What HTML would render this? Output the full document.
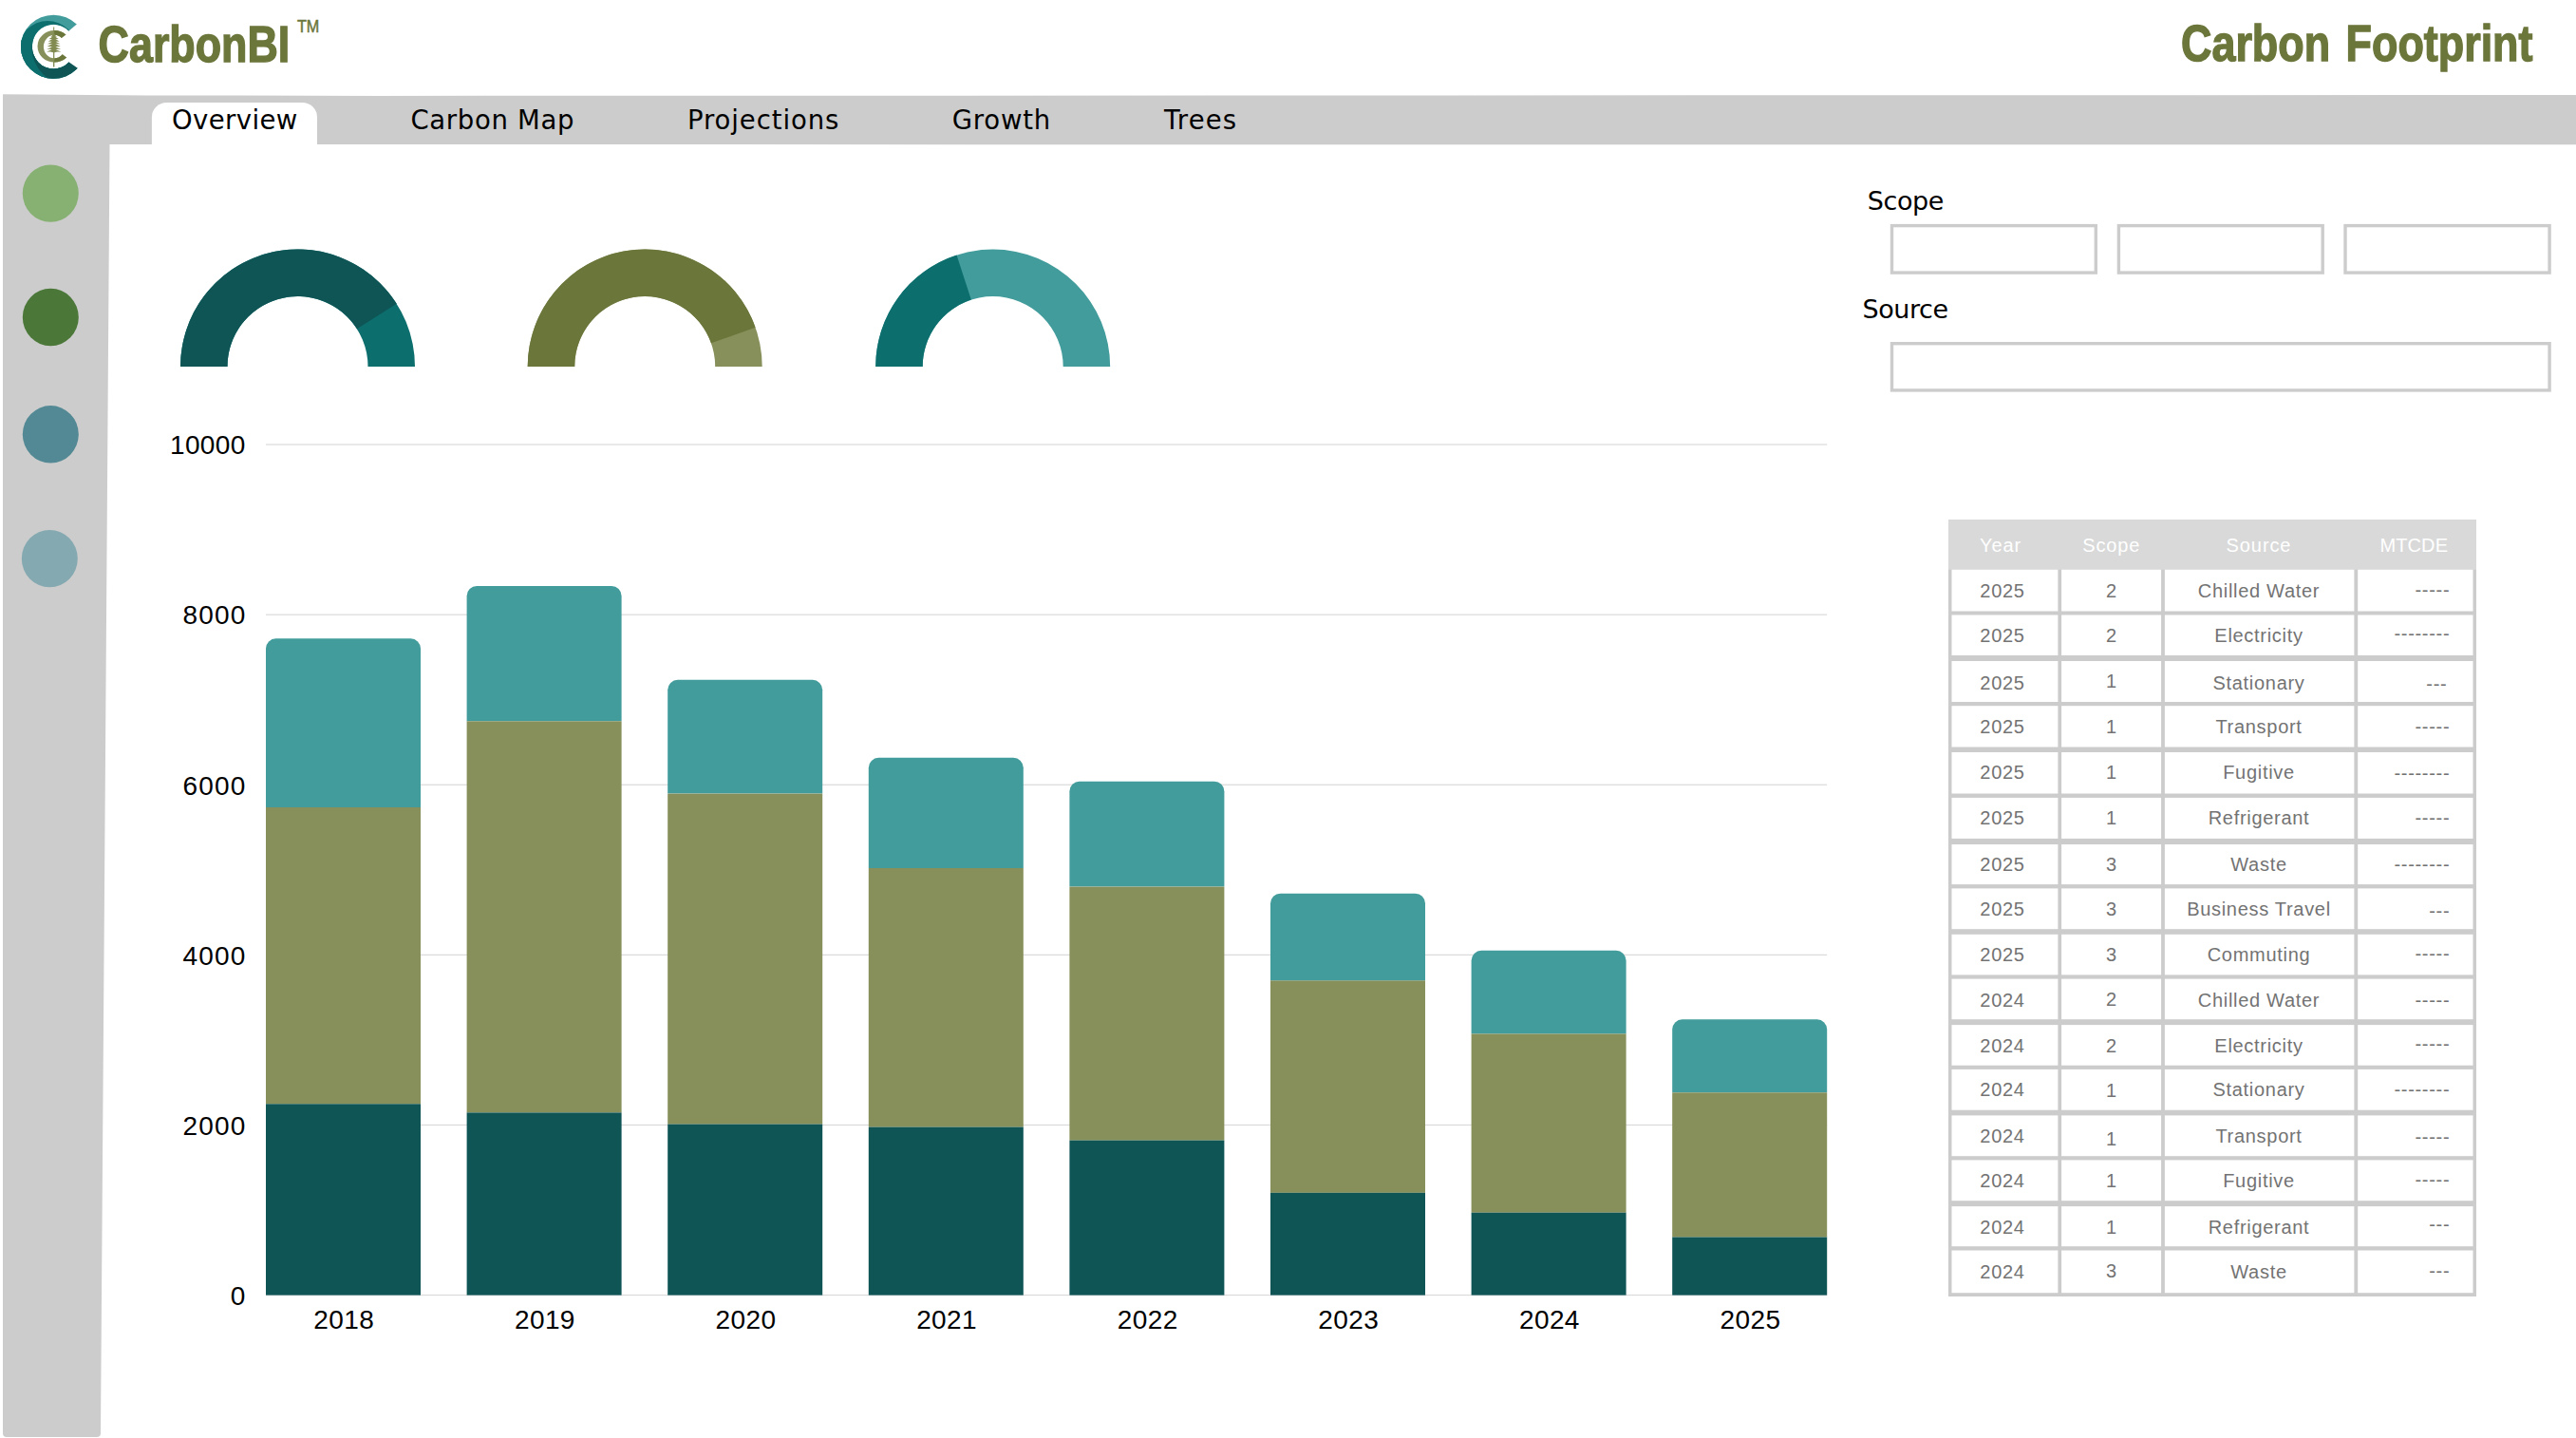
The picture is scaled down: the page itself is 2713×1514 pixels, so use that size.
<!DOCTYPE html>
<html lang="en"><head><meta charset="utf-8"><title>CarbonBI - Carbon Footprint</title>
<style>
html,body{margin:0;padding:0;background:#fff;}
body{width:2713px;height:1514px;overflow:hidden;position:relative;}
svg{position:absolute;left:0;top:0;display:block;}
text{font-family:"Liberation Sans",sans-serif;}
.dj{font-family:"DejaVu Sans","Liberation Sans",sans-serif;}
.tab{font-family:"DejaVu Sans","Liberation Sans",sans-serif;font-size:27.5px;fill:#000;letter-spacing:0.5px;}
.lbl{font-family:"DejaVu Sans","Liberation Sans",sans-serif;font-size:27px;fill:#000;letter-spacing:-0.4px;}
.ax{font-size:28px;fill:#000;letter-spacing:0.4px;}
.brand{font-weight:bold;fill:#6b763b;stroke:#6b763b;stroke-width:1.4px;stroke-linejoin:miter;}
.th{font-size:20px;fill:#fff;letter-spacing:0.7px;text-anchor:middle;}
.td{font-size:20px;fill:#737373;letter-spacing:0.7px;text-anchor:middle;}
.tdr{font-size:20px;fill:#737373;letter-spacing:0.7px;text-anchor:end;}
</style></head><body>
<svg width="2713" height="1514" viewBox="0 0 2713 1514">
<path d="M3 99.3 L155 100.4 L400 100.9 L1300 100.5 L2713 100 V152.3 L1300 152.3 L115.5 151.9 L106 1509 Q106 1513 102 1513 H7 Q3 1513 3 1509 Z" fill="#cccccc"/>
<path d="M159.9 153 V123.5 A15.5 15.5 0 0 1 175.4 108 H318.5 A15.5 15.5 0 0 1 334 123.5 V153 Z" fill="#fff"/>
<text class="tab" x="181.0" y="135.6" style="letter-spacing:0.4px">Overview</text>
<text class="tab" x="432.4" y="135.6" style="letter-spacing:0.7px">Carbon Map</text>
<text class="tab" x="724" y="135.6" style="letter-spacing:0.9px">Projections</text>
<text class="tab" x="1002.7" y="135.6" style="letter-spacing:0.8px">Growth</text>
<text class="tab" x="1226" y="135.6" style="letter-spacing:1.1px">Trees</text>
<ellipse cx="53.3" cy="203.6" rx="29.5" ry="30.2" fill="#86b172"/>
<ellipse cx="53.3" cy="334.0" rx="29.5" ry="30.2" fill="#4b7838"/>
<ellipse cx="53.3" cy="457.3" rx="29.5" ry="30.2" fill="#528994"/>
<ellipse cx="52.3" cy="588.1" rx="29.5" ry="30.2" fill="#85a9b1"/>
<defs>
<clipPath id="cOuter"><path clip-rule="evenodd" d="M21.94 49.16 a34.43 33.52 0 1 0 68.86 0 a34.43 33.52 0 1 0 -68.86 0 Z M33.8 49.08 a22.53 23.44 0 1 0 45.06 0 a22.53 23.44 0 1 0 -45.06 0 Z"/></clipPath>
<clipPath id="cInner"><path clip-rule="evenodd" d="M39.5 48.8 a17.8 16.8 0 1 0 35.6 0 a17.8 16.8 0 1 0 -35.6 0 Z M45.9 49.12 a11.38 12.29 0 1 0 22.76 0 a11.38 12.29 0 1 0 -22.76 0 Z"/></clipPath>
<clipPath id="lowHalf"><rect x="15" y="47" width="75" height="45"/></clipPath>
</defs>
<g clip-path="url(#cOuter)">
<rect x="15" y="10" width="80" height="80" fill="#429c9c"/>
<circle cx="50.1" cy="52.3" r="30.4" fill="#0d6e6e"/>
<rect x="15" y="40" width="80" height="50" fill="#0d6e6e"/>
<g clip-path="url(#lowHalf)"><circle cx="72.6" cy="50.1" r="39.05" fill="#0f5556"/></g>
</g>
<path d="M59.75 43.15 L89.5 18.3 L96 18 L96 79 L90.7 77.9 L58.85 55.85 Z" fill="#fff"/>
<g clip-path="url(#cInner)">
<rect x="35" y="28" width="40" height="42" fill="#87905b"/>
<rect x="56.7" y="28" width="20" height="42" fill="#6b763b"/>
</g>
<path d="M61.6 42.4 L74.2 32.9 L77 33 L77 64 L74.5 63.8 L61.9 54.3 Z" fill="#fff"/>
<g fill="#828c52">
<path d="M56.2 28.4 L57.2 28.4 L57.4 70.6 L56.0 70.6 Z"/>
<path d="M56.7 35.2 L54.8 37.4 L53.5 38.7 L55.3 38.8 L56.7 39.7 L58.1 38.8 L59.9 38.7 L58.6 37.4 Z"/>
<path d="M56.7 37.6 L53.7 39.8 L51.7 41.1 L54.5 41.2 L56.7 42.1 L59.0 41.2 L61.7 41.1 L59.7 39.8 Z"/>
<path d="M56.7 40.1 L53.1 42.3 L50.7 43.6 L54.0 43.7 L56.7 44.6 L59.4 43.7 L62.7 43.6 L60.3 42.3 Z"/>
<path d="M56.7 42.7 L52.6 44.9 L49.9 46.2 L53.6 46.3 L56.7 47.2 L59.8 46.3 L63.5 46.2 L60.8 44.9 Z"/>
<path d="M56.7 45.4 L52.5 47.6 L49.7 48.9 L53.6 49.0 L56.7 49.9 L59.9 49.0 L63.7 48.9 L60.9 47.6 Z"/>
<path d="M56.7 48.2 L52.3 50.4 L49.3 51.7 L53.4 51.8 L56.7 52.7 L60.0 51.8 L64.1 51.7 L61.1 50.4 Z"/>
<path d="M56.7 51.0 L52.1 53.2 L49.1 54.5 L53.3 54.6 L56.7 55.5 L60.1 54.6 L64.3 54.5 L61.3 53.2 Z"/>
</g>
<text class="brand" transform="translate(103.6,64.8) scale(0.83,1)" x="0" y="0" font-size="54">CarbonBI</text>
<text class="brand" style="stroke-width:0.5px;font-weight:normal" transform="translate(312.9,33.9) scale(0.87,1)" x="0" y="0" font-size="18.6">TM</text>
<text class="brand" transform="translate(2297,64.2) scale(0.847,1)" x="0" y="0" font-size="53" style="word-spacing:4.7px">Carbon Footprint</text>
<path d="M190.00 386.00 A123.5 123.5 0 0 1 437.00 386.00 L387.50 386.00 A74 74 0 0 0 239.50 386.00 Z" fill="#0d6e6e"/>
<path d="M190.00 386.00 A123.5 123.5 0 0 1 417.77 319.83 L375.98 346.35 A74 74 0 0 0 239.50 386.00 Z" fill="#0f5556"/>
<path d="M555.70 386.00 A123.5 123.5 0 0 1 802.70 386.00 L753.20 386.00 A74 74 0 0 0 605.20 386.00 Z" fill="#87905b"/>
<path d="M555.70 386.00 A123.5 123.5 0 0 1 795.62 344.77 L748.96 361.30 A74 74 0 0 0 605.20 386.00 Z" fill="#6b763b"/>
<path d="M922.20 386.00 A123.5 123.5 0 0 1 1169.20 386.00 L1119.70 386.00 A74 74 0 0 0 971.70 386.00 Z" fill="#429c9c"/>
<path d="M922.20 386.00 A123.5 123.5 0 0 1 1007.54 268.54 L1022.83 315.62 A74 74 0 0 0 971.70 386.00 Z" fill="#0d6e6e"/>
<rect x="280" y="1362.95" width="1644.2" height="1.2" fill="#dadada"/>
<text class="ax" x="258.8" y="1373.8" text-anchor="end" style="letter-spacing:0.4px">0</text>
<rect x="280" y="1183.85" width="1644.2" height="1.2" fill="#dadada"/>
<text class="ax" x="259.6" y="1194.7" text-anchor="end" style="letter-spacing:1.2px">2000</text>
<rect x="280" y="1004.75" width="1644.2" height="1.2" fill="#dadada"/>
<text class="ax" x="259.6" y="1015.6" text-anchor="end" style="letter-spacing:1.2px">4000</text>
<rect x="280" y="825.65" width="1644.2" height="1.2" fill="#dadada"/>
<text class="ax" x="259.6" y="836.5" text-anchor="end" style="letter-spacing:1.2px">6000</text>
<rect x="280" y="646.55" width="1644.2" height="1.2" fill="#dadada"/>
<text class="ax" x="259.6" y="657.4" text-anchor="end" style="letter-spacing:1.2px">8000</text>
<rect x="280" y="467.45" width="1644.2" height="1.2" fill="#dadada"/>
<text class="ax" x="258.8" y="478.3" text-anchor="end" style="letter-spacing:0.4px">10000</text>
<path d="M280.0 850.0 V682.8 A10.5 10.5 0 0 1 290.5 672.3 H432.5 A10.5 10.5 0 0 1 443.0 682.8 V850.0 Z" fill="#429c9c"/>
<rect x="280.0" y="850.0" width="163" height="312.3" fill="#87905b"/>
<rect x="280.0" y="1162.3" width="163" height="201.3" fill="#0f5556"/>
<text class="ax" x="362.3" y="1399.4" text-anchor="middle">2018</text>
<path d="M491.6 759.3 V627.4 A10.5 10.5 0 0 1 502.1 616.9 H644.1 A10.5 10.5 0 0 1 654.6 627.4 V759.3 Z" fill="#429c9c"/>
<rect x="491.6" y="759.3" width="163" height="412.1" fill="#87905b"/>
<rect x="491.6" y="1171.4" width="163" height="192.2" fill="#0f5556"/>
<text class="ax" x="573.9" y="1399.4" text-anchor="middle">2019</text>
<path d="M703.2 835.6 V726.3 A10.5 10.5 0 0 1 713.7 715.8 H855.7 A10.5 10.5 0 0 1 866.2 726.3 V835.6 Z" fill="#429c9c"/>
<rect x="703.2" y="835.6" width="163" height="348.0" fill="#87905b"/>
<rect x="703.2" y="1183.6" width="163" height="180.0" fill="#0f5556"/>
<text class="ax" x="785.5" y="1399.4" text-anchor="middle">2020</text>
<path d="M914.8 914.0 V808.3 A10.5 10.5 0 0 1 925.3 797.8 H1067.3 A10.5 10.5 0 0 1 1077.8 808.3 V914.0 Z" fill="#429c9c"/>
<rect x="914.8" y="914.0" width="163" height="272.6" fill="#87905b"/>
<rect x="914.8" y="1186.6" width="163" height="177.0" fill="#0f5556"/>
<text class="ax" x="997.1" y="1399.4" text-anchor="middle">2021</text>
<path d="M1126.4 933.6 V833.2 A10.5 10.5 0 0 1 1136.9 822.7 H1278.9 A10.5 10.5 0 0 1 1289.4 833.2 V933.6 Z" fill="#429c9c"/>
<rect x="1126.4" y="933.6" width="163" height="267.0" fill="#87905b"/>
<rect x="1126.4" y="1200.6" width="163" height="163.0" fill="#0f5556"/>
<text class="ax" x="1208.7" y="1399.4" text-anchor="middle">2022</text>
<path d="M1338.0 1032.4 V951.2 A10.5 10.5 0 0 1 1348.5 940.7 H1490.5 A10.5 10.5 0 0 1 1501.0 951.2 V1032.4 Z" fill="#429c9c"/>
<rect x="1338.0" y="1032.4" width="163" height="223.4" fill="#87905b"/>
<rect x="1338.0" y="1255.8" width="163" height="107.8" fill="#0f5556"/>
<text class="ax" x="1420.3" y="1399.4" text-anchor="middle">2023</text>
<path d="M1549.6 1088.5 V1011.3 A10.5 10.5 0 0 1 1560.1 1000.8 H1702.1 A10.5 10.5 0 0 1 1712.6 1011.3 V1088.5 Z" fill="#429c9c"/>
<rect x="1549.6" y="1088.5" width="163" height="188.2" fill="#87905b"/>
<rect x="1549.6" y="1276.7" width="163" height="86.9" fill="#0f5556"/>
<text class="ax" x="1631.9" y="1399.4" text-anchor="middle">2024</text>
<path d="M1761.2 1150.3 V1083.8 A10.5 10.5 0 0 1 1771.7 1073.3 H1913.7 A10.5 10.5 0 0 1 1924.2 1083.8 V1150.3 Z" fill="#429c9c"/>
<rect x="1761.2" y="1150.3" width="163" height="152.2" fill="#87905b"/>
<rect x="1761.2" y="1302.5" width="163" height="61.1" fill="#0f5556"/>
<text class="ax" x="1843.5" y="1399.4" text-anchor="middle">2025</text>
<text class="lbl" x="1966.8" y="220.8">Scope</text>
<text class="lbl" x="1961.4" y="334.9">Source</text>
<rect x="1992.5" y="237.6" width="214.8" height="49.5" fill="#fff" stroke="#cccccc" stroke-width="3.4"/>
<rect x="2231.4" y="237.6" width="214.8" height="49.5" fill="#fff" stroke="#cccccc" stroke-width="3.4"/>
<rect x="2470.0" y="237.6" width="215.1" height="49.5" fill="#fff" stroke="#cccccc" stroke-width="3.4"/>
<rect x="1992.5" y="361.7" width="692.6" height="49.2" fill="#fff" stroke="#cccccc" stroke-width="3.4"/>
<rect x="2052" y="547" width="556" height="818" fill="#cccccc"/>
<rect x="2052" y="547" width="556" height="52.7" fill="#d9d9d9"/>
<rect x="2055.5" y="599.7" width="111.9" height="43.8" fill="#fff"/>
<rect x="2171.1" y="599.7" width="105.0" height="43.8" fill="#fff"/>
<rect x="2279.9" y="599.7" width="199.5" height="43.8" fill="#fff"/>
<rect x="2483.2" y="599.7" width="121.3" height="43.8" fill="#fff"/>
<rect x="2055.5" y="647.5" width="111.9" height="42.5" fill="#fff"/>
<rect x="2171.1" y="647.5" width="105.0" height="42.5" fill="#fff"/>
<rect x="2279.9" y="647.5" width="199.5" height="42.5" fill="#fff"/>
<rect x="2483.2" y="647.5" width="121.3" height="42.5" fill="#fff"/>
<rect x="2055.5" y="696" width="111.9" height="43.0" fill="#fff"/>
<rect x="2171.1" y="696" width="105.0" height="43.0" fill="#fff"/>
<rect x="2279.9" y="696" width="199.5" height="43.0" fill="#fff"/>
<rect x="2483.2" y="696" width="121.3" height="43.0" fill="#fff"/>
<rect x="2055.5" y="743.2" width="111.9" height="43.3" fill="#fff"/>
<rect x="2171.1" y="743.2" width="105.0" height="43.3" fill="#fff"/>
<rect x="2279.9" y="743.2" width="199.5" height="43.3" fill="#fff"/>
<rect x="2483.2" y="743.2" width="121.3" height="43.3" fill="#fff"/>
<rect x="2055.5" y="792" width="111.9" height="43.5" fill="#fff"/>
<rect x="2171.1" y="792" width="105.0" height="43.5" fill="#fff"/>
<rect x="2279.9" y="792" width="199.5" height="43.5" fill="#fff"/>
<rect x="2483.2" y="792" width="121.3" height="43.5" fill="#fff"/>
<rect x="2055.5" y="839.9" width="111.9" height="43.0" fill="#fff"/>
<rect x="2171.1" y="839.9" width="105.0" height="43.0" fill="#fff"/>
<rect x="2279.9" y="839.9" width="199.5" height="43.0" fill="#fff"/>
<rect x="2483.2" y="839.9" width="121.3" height="43.0" fill="#fff"/>
<rect x="2055.5" y="889" width="111.9" height="42.1" fill="#fff"/>
<rect x="2171.1" y="889" width="105.0" height="42.1" fill="#fff"/>
<rect x="2279.9" y="889" width="199.5" height="42.1" fill="#fff"/>
<rect x="2483.2" y="889" width="121.3" height="42.1" fill="#fff"/>
<rect x="2055.5" y="935.4" width="111.9" height="42.8" fill="#fff"/>
<rect x="2171.1" y="935.4" width="105.0" height="42.8" fill="#fff"/>
<rect x="2279.9" y="935.4" width="199.5" height="42.8" fill="#fff"/>
<rect x="2483.2" y="935.4" width="121.3" height="42.8" fill="#fff"/>
<rect x="2055.5" y="983.8" width="111.9" height="42.6" fill="#fff"/>
<rect x="2171.1" y="983.8" width="105.0" height="42.6" fill="#fff"/>
<rect x="2279.9" y="983.8" width="199.5" height="42.6" fill="#fff"/>
<rect x="2483.2" y="983.8" width="121.3" height="42.6" fill="#fff"/>
<rect x="2055.5" y="1030.6" width="111.9" height="42.6" fill="#fff"/>
<rect x="2171.1" y="1030.6" width="105.0" height="42.6" fill="#fff"/>
<rect x="2279.9" y="1030.6" width="199.5" height="42.6" fill="#fff"/>
<rect x="2483.2" y="1030.6" width="121.3" height="42.6" fill="#fff"/>
<rect x="2055.5" y="1079.1" width="111.9" height="42.6" fill="#fff"/>
<rect x="2171.1" y="1079.1" width="105.0" height="42.6" fill="#fff"/>
<rect x="2279.9" y="1079.1" width="199.5" height="42.6" fill="#fff"/>
<rect x="2483.2" y="1079.1" width="121.3" height="42.6" fill="#fff"/>
<rect x="2055.5" y="1125.9" width="111.9" height="42.8" fill="#fff"/>
<rect x="2171.1" y="1125.9" width="105.0" height="42.8" fill="#fff"/>
<rect x="2279.9" y="1125.9" width="199.5" height="42.8" fill="#fff"/>
<rect x="2483.2" y="1125.9" width="121.3" height="42.8" fill="#fff"/>
<rect x="2055.5" y="1174.4" width="111.9" height="42.8" fill="#fff"/>
<rect x="2171.1" y="1174.4" width="105.0" height="42.8" fill="#fff"/>
<rect x="2279.9" y="1174.4" width="199.5" height="42.8" fill="#fff"/>
<rect x="2483.2" y="1174.4" width="121.3" height="42.8" fill="#fff"/>
<rect x="2055.5" y="1221.4" width="111.9" height="42.8" fill="#fff"/>
<rect x="2171.1" y="1221.4" width="105.0" height="42.8" fill="#fff"/>
<rect x="2279.9" y="1221.4" width="199.5" height="42.8" fill="#fff"/>
<rect x="2483.2" y="1221.4" width="121.3" height="42.8" fill="#fff"/>
<rect x="2055.5" y="1270.1" width="111.9" height="42.1" fill="#fff"/>
<rect x="2171.1" y="1270.1" width="105.0" height="42.1" fill="#fff"/>
<rect x="2279.9" y="1270.1" width="199.5" height="42.1" fill="#fff"/>
<rect x="2483.2" y="1270.1" width="121.3" height="42.1" fill="#fff"/>
<rect x="2055.5" y="1316.5" width="111.9" height="44.7" fill="#fff"/>
<rect x="2171.1" y="1316.5" width="105.0" height="44.7" fill="#fff"/>
<rect x="2279.9" y="1316.5" width="199.5" height="44.7" fill="#fff"/>
<rect x="2483.2" y="1316.5" width="121.3" height="44.7" fill="#fff"/>
<text class="th" x="2107.0" y="581" style="letter-spacing:0.9px">Year</text>
<text class="th" x="2223.8" y="581" style="letter-spacing:0.9px">Scope</text>
<text class="th" x="2379.0" y="581" style="letter-spacing:0.9px">Source</text>
<text class="th" x="2542.3" y="581" style="letter-spacing:0.1px">MTCDE</text>
<text class="td" x="2109" y="628.9">2025</text>
<text class="td" x="2224" y="628.9">2</text>
<text class="td" x="2379" y="628.9">Chilled Water</text>
<text class="tdr" x="2580.3" y="627.8">-----</text>
<text class="td" x="2109" y="676.0">2025</text>
<text class="td" x="2224" y="676.0">2</text>
<text class="td" x="2379" y="676.0">Electricity</text>
<text class="tdr" x="2580.3" y="674.4">--------</text>
<text class="td" x="2109" y="726.2">2025</text>
<text class="td" x="2224" y="724.3">1</text>
<text class="td" x="2379" y="726.2">Stationary</text>
<text class="tdr" x="2577.4" y="726.5">---</text>
<text class="td" x="2109" y="771.9">2025</text>
<text class="td" x="2224" y="771.9">1</text>
<text class="td" x="2379" y="771.9">Transport</text>
<text class="tdr" x="2580.3" y="771.6">-----</text>
<text class="td" x="2109" y="820.0">2025</text>
<text class="td" x="2224" y="820.0">1</text>
<text class="td" x="2379" y="820.0">Fugitive</text>
<text class="tdr" x="2580.3" y="821.0">--------</text>
<text class="td" x="2109" y="868.1">2025</text>
<text class="td" x="2224" y="868.1">1</text>
<text class="td" x="2379" y="868.1">Refrigerant</text>
<text class="tdr" x="2580.3" y="867.5">-----</text>
<text class="td" x="2109" y="916.9">2025</text>
<text class="td" x="2224" y="916.9">3</text>
<text class="td" x="2379" y="916.9">Waste</text>
<text class="tdr" x="2580.3" y="917.2">--------</text>
<text class="td" x="2109" y="963.7">2025</text>
<text class="td" x="2224" y="963.7">3</text>
<text class="td" x="2379" y="963.7">Business Travel</text>
<text class="tdr" x="2580.3" y="965.7">---</text>
<text class="td" x="2109" y="1012.0">2025</text>
<text class="td" x="2224" y="1012.0">3</text>
<text class="td" x="2379" y="1012.0">Commuting</text>
<text class="tdr" x="2580.3" y="1010.6">-----</text>
<text class="td" x="2109" y="1060.0">2024</text>
<text class="td" x="2224" y="1058.8">2</text>
<text class="td" x="2379" y="1060.0">Chilled Water</text>
<text class="tdr" x="2580.3" y="1059.6">-----</text>
<text class="td" x="2109" y="1107.7">2024</text>
<text class="td" x="2224" y="1107.7">2</text>
<text class="td" x="2379" y="1107.7">Electricity</text>
<text class="tdr" x="2580.3" y="1106.4">-----</text>
<text class="td" x="2109" y="1153.8">2024</text>
<text class="td" x="2224" y="1155.0">1</text>
<text class="td" x="2379" y="1153.8">Stationary</text>
<text class="tdr" x="2580.3" y="1154.1">--------</text>
<text class="td" x="2109" y="1203.1">2024</text>
<text class="td" x="2224" y="1205.5">1</text>
<text class="td" x="2379" y="1203.1">Transport</text>
<text class="tdr" x="2580.3" y="1203.7">-----</text>
<text class="td" x="2109" y="1250.1">2024</text>
<text class="td" x="2224" y="1250.1">1</text>
<text class="td" x="2379" y="1250.1">Fugitive</text>
<text class="tdr" x="2580.3" y="1249.3">-----</text>
<text class="td" x="2109" y="1298.5">2024</text>
<text class="td" x="2224" y="1298.5">1</text>
<text class="td" x="2379" y="1298.5">Refrigerant</text>
<text class="tdr" x="2580.3" y="1295.8">---</text>
<text class="td" x="2109" y="1346.1">2024</text>
<text class="td" x="2224" y="1344.9">3</text>
<text class="td" x="2379" y="1346.1">Waste</text>
<text class="tdr" x="2580.3" y="1344.6">---</text>
</svg></body></html>
